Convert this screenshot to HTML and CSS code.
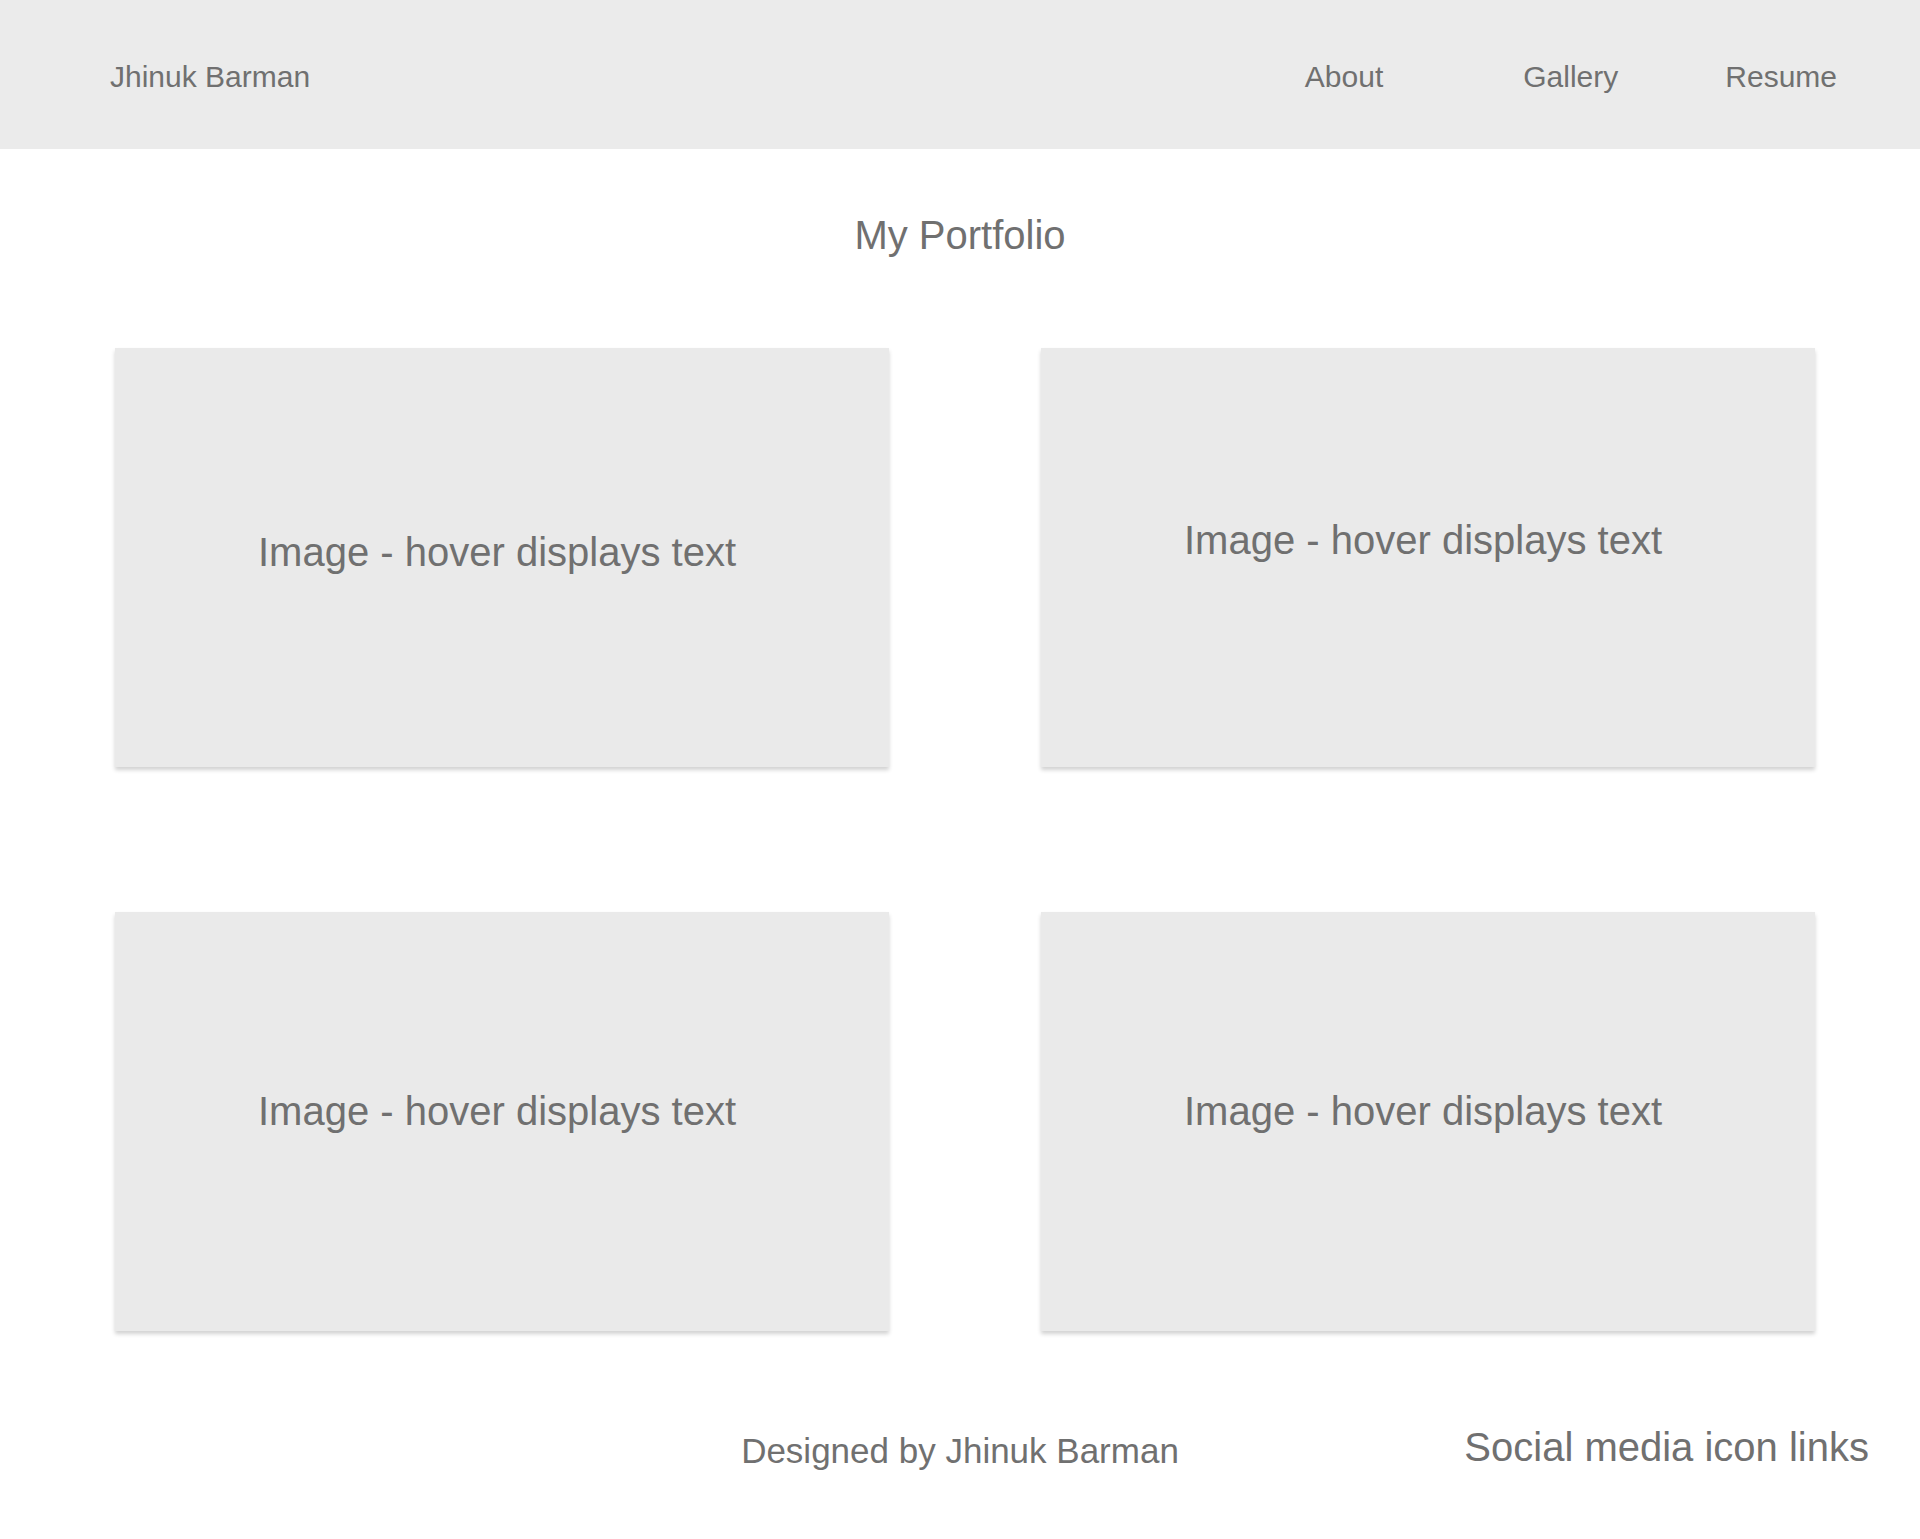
FILE: index.html
```
<!DOCTYPE html>
<html lang="en">
<head>
<meta charset="utf-8">
<title>Jhinuk Barman - My Portfolio</title>
<link rel="stylesheet" href="styles.css">
</head>
<body>
<header class="site-header">
  <a class="brand" href="#">Jhinuk Barman</a>
  <nav class="nav">
    <a class="nav-link nav-about" href="#">About</a>
    <a class="nav-link" href="#">Gallery</a>
    <a class="nav-link" href="#">Resume</a>
  </nav>
</header>
<main class="main">
  <h1 class="title">My Portfolio</h1>
  <section class="gallery">
    <div class="card card-1"><span>Image - hover displays text</span></div>
    <div class="card card-2"><span>Image - hover displays text</span></div>
    <div class="card card-3"><span>Image - hover displays text</span></div>
    <div class="card card-4"><span>Image - hover displays text</span></div>
  </section>
</main>
<footer class="site-footer">
  <div class="footer-spacer"></div>
  <p class="credit">Designed by Jhinuk Barman</p>
  <p class="social">Social media icon links</p>
</footer>
</body>
</html>
```
FILE: styles.css
```
* {
  box-sizing: border-box;
}

html, body {
  margin: 0;
  padding: 0;
}

body {
  font-family: "Liberation Sans", Arial, Helvetica, sans-serif;
  color: #707070;
  background: #ffffff;
  width: 1920px;
  height: 1539px;
  overflow: hidden;
}

a {
  color: inherit;
  text-decoration: none;
}

.site-header {
  height: 149px;
  background: #ebebeb;
  display: flex;
  align-items: flex-start;
  padding: 62px 83px 0 110px;
  font-size: 30px;
  line-height: 30px;
}

.nav {
  margin-left: auto;
  display: flex;
}

.nav-link + .nav-link {
  margin-left: 107px;
}

.nav-about {
  margin-right: 33px;
}

.main {
  padding-top: 63px;
}

.title {
  margin: 0;
  font-weight: normal;
  font-size: 40px;
  line-height: 46px;
  text-align: center;
}

.gallery {
  margin-top: 90px;
  padding-left: 115px;
  display: grid;
  grid-template-columns: 774px 774px;
  grid-template-rows: 419px 419px;
  column-gap: 152px;
  row-gap: 145px;
}

.card {
  background: #eaeaea;
  box-shadow: 0 3px 4px rgba(0, 0, 0, 0.18);
  display: flex;
  justify-content: center;
  align-items: flex-start;
  padding-right: 10px;
  font-size: 40px;
  line-height: 46px;
}

.card-1 { padding-top: 181px; }
.card-2 { padding-top: 169px; }
.card-3 { padding-top: 176px; }
.card-4 { padding-top: 176px; }

.site-footer {
  padding-top: 93px;
  display: grid;
  grid-template-columns: 1fr auto 1fr;
  align-items: start;
}

.credit {
  margin: 7px 0 0;
  font-size: 35px;
  line-height: 40px;
}

.social {
  margin: 0;
  justify-self: end;
  padding-right: 51px;
  font-size: 40px;
  line-height: 46px;
}
```
